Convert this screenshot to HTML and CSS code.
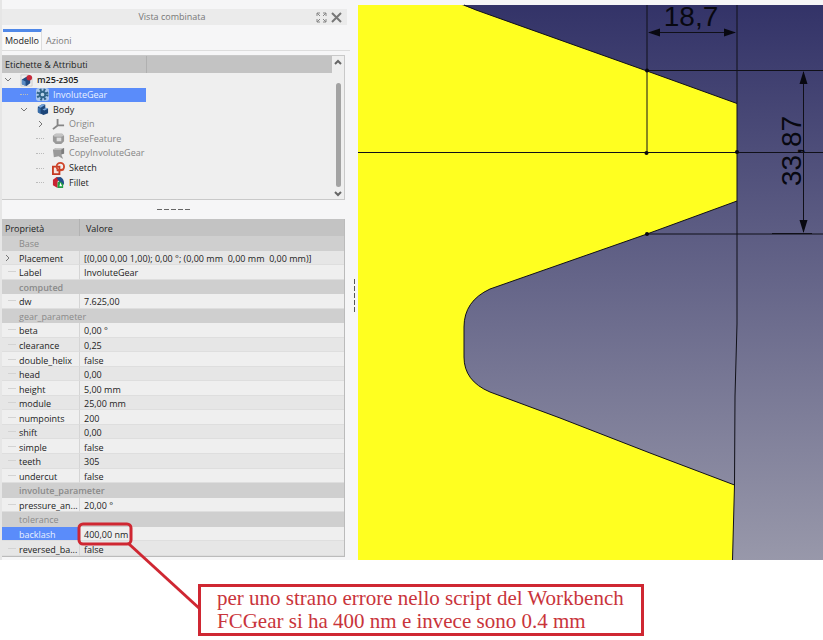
FILE: index.html
```html
<!DOCTYPE html>
<html lang="it">
<head>
<meta charset="utf-8">
<title>Vista combinata</title>
<link rel="stylesheet" href="styles.css">
</head>
<body>
<main class="workspace">
  <aside class="sidebar">
    <header class="dock-title">
      <h1>Vista combinata</h1>
      <button type="button" class="icon-button" aria-label="Sgancia">
        <svg width="11" height="11" viewBox="0 0 11 11" fill="none" stroke="#858585"><path d="M1 4V1h3M7 1h3v3M10 7v3H7M4 10H1V7M1 1l3 3M10 1L7 4M10 10L7 7M1 10l3-3"/></svg>
      </button>
      <button type="button" class="icon-button" aria-label="Chiudi">
        <svg width="11" height="11" viewBox="0 0 11 11" fill="none" stroke="#777" stroke-width="2"><path d="M1 1l9 9M10 1l-9 9"/></svg>
      </button>
    </header>
    <nav class="tabs">
      <button type="button" class="tab active">Modello</button>
      <button type="button" class="tab">Azioni</button>
    </nav>

    <section class="tree-panel">
      <div class="tree-main">
        <div class="tree-head"><span>Etichette &amp; Attributi</span></div>
        <ul class="tree">
          <li class="depth-0 strong">
            <svg class="arrow" viewBox="0 0 8 8"><path d="M1 2l3 3 3-3"/></svg>
            <svg class="icon" viewBox="0 0 14 14"><path d="M1 1h9l3 3v9H1z" fill="#eee" stroke="#ccc"/><path d="M2 6l5-3 4 2v5l-4 3-5-2z" fill="#234b80"/><path d="M2 6l4 2v5l-4-2z" fill="#5b8cc5"/><circle cx="10" cy="4" r="3" fill="#c6283a"/></svg>
            <span>m25-z305</span>
          </li>
          <li class="depth-1 selected">
            <i class="stub"></i>
            <svg class="icon" viewBox="0 0 14 14"><rect x="0" y="0" width="14" height="14" rx="3" fill="#a9c6ee"/><circle cx="7" cy="7" r="5" fill="none" stroke="#2f6387" stroke-width="3" stroke-dasharray="2 2"/><circle cx="7" cy="7" r="3" fill="#b7d2ea" stroke="#2f6387" stroke-width="2"/></svg>
            <span>InvoluteGear</span>
          </li>
          <li class="depth-1">
            <svg class="arrow" viewBox="0 0 8 8"><path d="M1 2l3 3 3-3"/></svg>
            <svg class="icon" viewBox="0 0 14 14"><path d="M2 4l5-3 3 1v3l3 1v5l-5 2-6-3z" fill="#1d4679"/><path d="M2 4l3 1 5-3-3-1zM7 7l4-2 2 1-4 2z" fill="#76a5dc"/><path d="M2 5l3 1v6l-3-2z" fill="#386da9"/></svg>
            <span>Body</span>
          </li>
          <li class="depth-2 muted">
            <svg class="arrow" viewBox="0 0 8 8"><path d="M3 1l3 3-3 3"/></svg>
            <svg class="icon" viewBox="0 0 14 14"><path d="M6 1v7h7M6 8l-5 4" fill="none" stroke="#858585" stroke-width="2"/></svg>
            <span>Origin</span>
          </li>
          <li class="depth-2 muted">
            <i class="stub"></i>
            <svg class="icon" viewBox="0 0 14 14"><path d="M1 4l3-2h7l2 2v6l-3 3H4l-3-3z" fill="#999"/><path d="M1 4l3-2h7l2 2-3 1H3z" fill="#c4c4c4"/><path d="M5 6h5v4H5z" fill="#ddd"/></svg>
            <span>BaseFeature</span>
          </li>
          <li class="depth-2 muted">
            <i class="stub"></i>
            <svg class="icon" viewBox="0 0 14 14"><path d="M1 3l3-2h9v6l-3 1 2 5-5-3-5 1z" fill="#9a9a9a"/><path d="M1 3l3-2h9l-3 2z" fill="#c6c6c6"/><path d="M10 3l3-2v6l-3 1z" fill="#7d7d7d"/></svg>
            <span>CopyInvoluteGear</span>
          </li>
          <li class="depth-2">
            <i class="stub"></i>
            <svg class="icon" viewBox="0 0 14 14"><path d="M1 5h7v8H1zM5 9l8-1" fill="#f6e6e2" stroke="#c63b24" stroke-width="2"/><circle cx="9" cy="5" r="4" fill="none" stroke="#d0472c" stroke-width="2"/></svg>
            <span>Sketch</span>
          </li>
          <li class="depth-2">
            <i class="stub"></i>
            <svg class="icon" viewBox="0 0 14 14"><path d="M1 4l4-3 5 1-4 4v7l-5-3z" fill="#c92433"/><path d="M5 2l4-1q4 2 4 7l-2 3-4-6z" fill="#22508b"/><path d="M6 13V7q3-3 6 2v4z" fill="#23a044"/><path d="M9 7l2 4H8z" fill="#fff"/></svg>
            <span>Fillet</span>
          </li>
        </ul>
      </div>
      <div class="scrollbar">
        <button type="button" class="icon-button" aria-label="Scorri su"><svg width="8" height="6" viewBox="0 0 8 6" fill="none" stroke="#666" stroke-width="2"><path d="M1 5l3-3 3 3"/></svg></button>
        <div class="thumb"></div>
        <button type="button" class="icon-button" aria-label="Scorri giù"><svg width="8" height="6" viewBox="0 0 8 6" fill="none" stroke="#666" stroke-width="2"><path d="M1 1l3 3 3-3"/></svg></button>
      </div>
    </section>

    <div class="row-handle"><i></i><i></i><i></i><i></i><i></i></div>

    <table class="properties">
      <thead><tr><th scope="col">Proprietà</th><th scope="col">Valore</th></tr></thead>
      <tbody>
        <tr class="group"><th colspan="2">Base</th></tr>
        <tr class="alt parent"><th scope="row"><svg class="arrow" viewBox="0 0 8 8"><path d="M2 1l3 3-3 3"/></svg>Placement</th><td>[(0,00 0,00 1,00); 0,00 °; (0,00 mm&nbsp; 0,00 mm&nbsp; 0,00 mm)]</td></tr>
        <tr><th scope="row">Label</th><td>InvoluteGear</td></tr>
        <tr class="group bold"><th colspan="2">computed</th></tr>
        <tr><th scope="row">dw</th><td>7.625,00</td></tr>
        <tr class="group"><th colspan="2">gear_parameter</th></tr>
        <tr><th scope="row">beta</th><td>0,00 °</td></tr>
        <tr class="alt"><th scope="row">clearance</th><td>0,25</td></tr>
        <tr><th scope="row">double_helix</th><td>false</td></tr>
        <tr class="alt"><th scope="row">head</th><td>0,00</td></tr>
        <tr><th scope="row">height</th><td>5,00 mm</td></tr>
        <tr class="alt"><th scope="row">module</th><td>25,00 mm</td></tr>
        <tr><th scope="row">numpoints</th><td>200</td></tr>
        <tr class="alt"><th scope="row">shift</th><td>0,00</td></tr>
        <tr><th scope="row">simple</th><td>false</td></tr>
        <tr class="alt"><th scope="row">teeth</th><td>305</td></tr>
        <tr><th scope="row">undercut</th><td>false</td></tr>
        <tr class="group bold"><th colspan="2">involute_parameter</th></tr>
        <tr><th scope="row">pressure_an...</th><td>20,00 °</td></tr>
        <tr class="group"><th colspan="2">tolerance</th></tr>
        <tr class="current"><th scope="row">backlash</th><td>400,00 nm</td></tr>
        <tr class="alt"><th scope="row">reversed_ba...</th><td>false</td></tr>
      </tbody>
    </table>
  </aside>

  <div class="column-handle"><i></i><i></i><i></i><i></i><i></i></div>

  <section class="viewer">
    <svg viewBox="358 5 465 555" preserveAspectRatio="xMinYMin slice" role="img" aria-label="Profilo del dente">
      <defs>
        <linearGradient id="sky" x1="0" y1="0" x2="0" y2="1"><stop offset="0" stop-color="#333368"/><stop offset="1" stop-color="#9898aa"/></linearGradient>
      </defs>
      <rect x="358" y="5" width="465" height="555" fill="url(#sky)"/>
      <path d="M358 5H462L490 15L647 71L737 103.500V201L647 234L490 289Q464 301 464 327V357Q464 381 490 392L560 418L650 453L734.500 485L732.500 560H358z" fill="#ffff20"/>
      <g fill="none" stroke="#101018">
        <path d="M464 5Q475 10 490 15L647 71L737 103.500M737 201L647 234L490 289Q464 301 464 327V357Q464 381 490 392L560 418L650 453L734.500 485"/>
        <path d="M737 5V324L735 396L734.500 485L732.500 560"/>
        <path d="M358 152.500H823M647 5V153M647 70.500H823M647 234H823M772 233.500H812"/>
        <path d="M649 32.500H735M803.500 72V232"/>
      </g>
      <g fill="#080810">
        <path d="M648 32.500l12-4v8zM736 32.500l-12-4v8zM803.500 71l-4 13h8zM803.500 233l-4-13h8z"/>
        <circle cx="647" cy="70.500" r="2"/><circle cx="646.500" cy="153" r="2"/><circle cx="737" cy="152" r="2"/><circle cx="647" cy="234" r="2"/>
      </g>
      <g class="dimension">
        <text x="691" y="26" text-anchor="middle">18,7</text>
        <text transform="translate(801 151) rotate(-90)" text-anchor="middle">33,87</text>
      </g>
    </svg>
  </section>
</main>

<footer class="note">
  <p>per uno strano errore nello script del Workbench<br>FCGear si ha 400 nm e invece sono 0.4 mm</p>
</footer>

<svg class="markup" width="210" height="100" viewBox="0 0 210 100" fill="none" stroke="#cf2732" stroke-width="3" aria-hidden="true"><rect x="79" y="4" width="52" height="20" rx="4"/><path d="M129 24L200 89"/></svg>
</body>
</html>
```
FILE: styles.css
```css
* {
  box-sizing: border-box;
}

body {
  position: relative;
  margin: 0;
  background: #fff;
  color: #1c1c1c;
  font-family: "Open Sans", "Noto Sans", sans-serif;
  font-size: 9px;
  line-height: 14px;
}

button {
  padding: 0;
  border: 0;
  background: none;
  color: inherit;
  font: inherit;
}

.workspace {
  display: grid;
  grid-template-columns: 350px 8px 1fr;
  background: #f6f6f7;
}

.sidebar {
  padding: 9px 5px 3px 0;
  border-left: 2px solid #e6e6e6;
}

.dock-title {
  display: flex;
  align-items: center;
  gap: 4px;
  height: 16px;
  margin-right: -2px;
  padding-right: 5px;
  background: #ebebeb;
}

.dock-title h1 {
  flex: 1;
  margin: 0;
  padding-left: 30px;
  color: #777;
  font-size: 9px;
  font-weight: 400;
  text-align: center;
}

.icon-button {
  display: flex;
  align-items: center;
  justify-content: center;
}

.tabs {
  display: flex;
  height: 22px;
  margin: 4px -5px 4px 0;
  border-bottom: 1px solid #ddd;
}

.tab {
  padding: 0 4px;
  border-top: 3px solid transparent;
  color: #777;
}

.tab.active {
  margin-left: 1px;
  padding: 0 2px;
  border-top-color: #5088e8;
  border-right: 1px solid #ddd;
  background: #fafafa;
  color: #1c1c1c;
}

.tree-panel {
  display: flex;
  height: 145px;
  border: solid #c9c9c9;
  border-width: 1px 1px 1px 0;
  background: #efefef;
}

.tree-main {
  flex: 1;
}

.tree-head {
  display: flex;
  height: 17px;
  background: #c3c3c3;
  line-height: 18px;
}

.tree-head span {
  width: 145px;
  padding-left: 3px;
  border-right: 1px solid #b0b0b0;
}

.tree {
  display: grid;
  grid-auto-rows: 1fr;
  height: 117px;
  margin: 0;
  padding: 0;
  list-style: none;
}

.tree li {
  display: flex;
  align-items: center;
  gap: 4px;
  width: 144px;
  white-space: nowrap;
}

.depth-0 {
  padding-left: 2px;
}

.depth-1 {
  padding-left: 18px;
}

.depth-2 {
  padding-left: 34px;
}

.strong {
  font-weight: 600;
}

.muted {
  color: #858585;
}

.tree .selected {
  background: #5a8cfa;
  color: #e9f1ff;
}

.arrow {
  flex: none;
  width: 8px;
  height: 8px;
  fill: none;
  stroke: #777;
}

.icon {
  flex: none;
  width: 13px;
  height: 13px;
  margin-left: 4px;
}

.stub {
  width: 8px;
  border-top: 1px dotted #bbb;
}

.scrollbar {
  display: flex;
  flex-direction: column;
  align-items: center;
  gap: 4px;
  width: 12px;
  padding: 3px 0 2px;
}

.scrollbar .icon-button {
  height: 6px;
}

.thumb {
  flex: 1;
  width: 5px;
  margin-top: 14px;
  border-radius: 3px;
  background: #a3a3a3;
}

.row-handle {
  display: flex;
  align-items: center;
  justify-content: center;
  gap: 2px;
  height: 19px;
}

.row-handle i {
  width: 5px;
  height: 1px;
  background: #666;
}

.properties {
  width: 100%;
  height: 338px;
  border: solid #bbb;
  border-width: 0 1px 1px 0;
  border-collapse: separate;
  border-spacing: 0;
  table-layout: fixed;
  background: #efefef;
  line-height: 11px;
}

.properties th,
.properties td {
  padding: 2px 0 0 4px;
  border-bottom: 1px solid #dedede;
  font-weight: 400;
  text-align: left;
  white-space: nowrap;
}

.properties thead th {
  height: 17px;
  padding-left: 3px;
  border: 0;
  background: #c3c3c3;
}

.properties thead th:first-child {
  width: 78px;
  border-right: 1px solid #b2b2b2;
}

.properties thead th + th {
  padding-left: 6px;
}

.properties tbody th {
  padding-left: 17px;
  border-right: 1px solid #d5d5d5;
  background: linear-gradient(#d3d3d3, #d3d3d3) 6px 50% / 8px 1px no-repeat;
}

.properties .alt {
  background: #e6e6e6;
}

.properties .parent th {
  padding-left: 2px;
  background: none;
}

.parent .arrow {
  margin-right: 7px;
}

.properties .group th {
  border-color: #cfcfcf;
  background: #cfcfcf;
  color: #8a8a8a;
}

.properties .bold th {
  font-weight: 600;
}

.properties .current th {
  background: #5a8cfa;
  color: #e9f1ff;
}

.column-handle {
  display: flex;
  flex-direction: column;
  align-items: center;
  justify-content: center;
  gap: 2px;
  padding-top: 30px;
}

.column-handle i {
  width: 1px;
  height: 5px;
  background: #555;
}

.viewer {
  overflow: hidden;
  padding-top: 5px;
}

.viewer svg {
  display: block;
  width: 100%;
  height: 555px;
  overflow: visible;
}

.dimension {
  fill: #080810;
  font-family: "Liberation Sans", Arial, sans-serif;
  font-size: 28px;
}

.note {
  width: fit-content;
  margin: 24px 0 0 198px;
  padding: 0 17px 0 16px;
  border: 3px solid #cf2732;
}

.note p {
  margin: 0;
  color: #c9343b;
  font-family: "Liberation Serif", "Times New Roman", serif;
  font-size: 21px;
  line-height: 23px;
}

.markup {
  position: absolute;
  top: 520px;
  left: 0;
}
```
